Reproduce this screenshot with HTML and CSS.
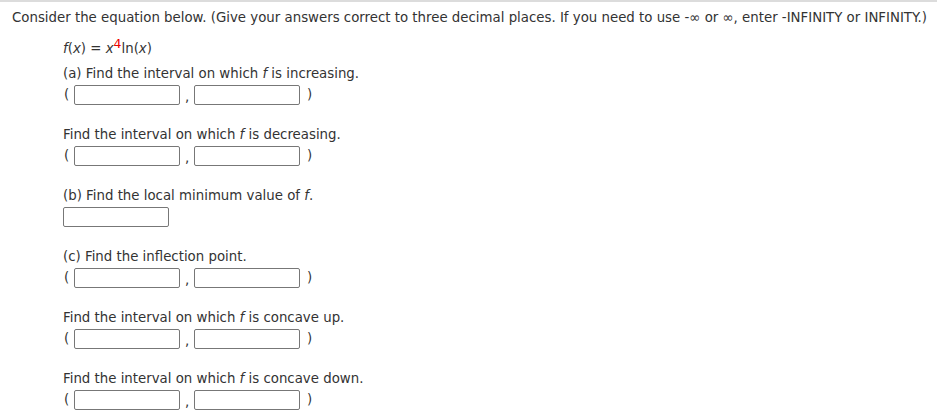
FILE: index.html
```html
<!DOCTYPE html>
<html>
<head>
<meta charset="utf-8">
<link rel="stylesheet" href="styles.css">
</head>
<body>
<div class="page">
  <p class="intro">Consider the equation below. (Give your answers correct to three decimal places. If you need to use -∞ or ∞, enter -INFINITY or INFINITY.)</p>
  <div class="content">
    <div class="math"><i>f</i>(<i>x</i>) = <i>x</i><sup class="red">4</sup>ln(<i>x</i>)</div>

    <div class="part">
      <div class="label">(a) Find the interval on which <i>f</i> is increasing.</div>
      <div class="row"><span class="paren">(</span><span class="box"></span><span class="comma">,</span><span class="box"></span><span class="paren close">)</span></div>
    </div>

    <div class="part">
      <div class="label">Find the interval on which <i>f</i> is decreasing.</div>
      <div class="row"><span class="paren">(</span><span class="box"></span><span class="comma">,</span><span class="box"></span><span class="paren close">)</span></div>
    </div>

    <div class="part">
      <div class="label">(b) Find the local minimum value of <i>f</i>.</div>
      <div class="row"><span class="box"></span></div>
    </div>

    <div class="part">
      <div class="label">(c) Find the inflection point.</div>
      <div class="row"><span class="paren">(</span><span class="box"></span><span class="comma">,</span><span class="box"></span><span class="paren close">)</span></div>
    </div>

    <div class="part">
      <div class="label">Find the interval on which <i>f</i> is concave up.</div>
      <div class="row"><span class="paren">(</span><span class="box"></span><span class="comma">,</span><span class="box"></span><span class="paren close">)</span></div>
    </div>

    <div class="part">
      <div class="label">Find the interval on which <i>f</i> is concave down.</div>
      <div class="row"><span class="paren">(</span><span class="box"></span><span class="comma">,</span><span class="box"></span><span class="paren close">)</span></div>
    </div>
  </div>
</div>
</body>
</html>
```

FILE: styles.css
```css
html, body {
  margin: 0;
  padding: 0;
  background: #fff;
}
body {
  font-family: "DejaVu Sans", Verdana, sans-serif;
  font-size: 13.33px;
  color: #333;
}
.page {
  border-top: 2px solid #dcdcdc;
}
.intro {
  margin: 0;
  padding: 8px 0 0 12px;
  line-height: 16px;
  white-space: nowrap;
}
.content {
  padding-left: 63px;
}
.math {
  margin-top: 15px;
  line-height: 16px;
  height: 16px;
}
.math sup {
  font-size: 12.5px;
  line-height: 0;
  vertical-align: 5px;
}
.red {
  color: #e00;
}
.part {
  height: 61px;
}
.math + .part {
  margin-top: 9px;
}
.label {
  line-height: 16px;
}
.row {
  margin-top: 3px;
  display: flex;
  align-items: center;
  height: 20px;
}
.paren {
  width: 11px;
  line-height: 16px;
  padding-left: 1px;
  box-sizing: border-box;
}
.paren.close {
  padding-left: 7px;
}
.comma {
  width: 14px;
  text-align: center;
  line-height: 16px;
  padding-top: 3px;
}
.box {
  display: block;
  width: 106px;
  height: 20px;
  box-sizing: border-box;
  border: 1px solid #777;
  border-radius: 2px;
  background: #fff;
}
```
